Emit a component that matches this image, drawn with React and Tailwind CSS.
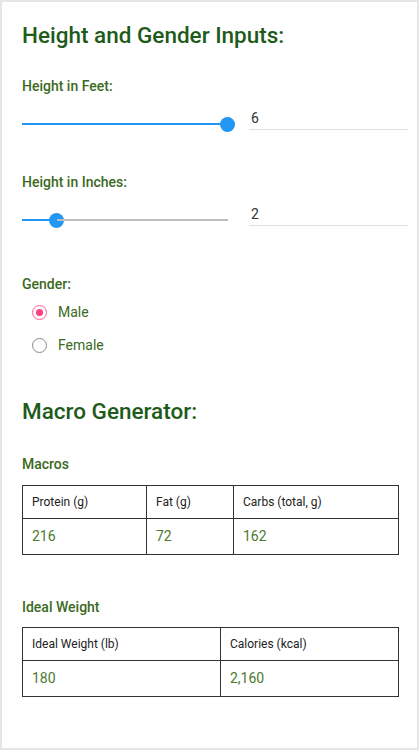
import { useState } from 'react';

function Slider({ value, max }) {
  const pct = (value / max) * 100;
  return (
    <div className="flex h-4 w-[206px] items-center">
      <div className="h-[2px] bg-[#2196f3]" style={{ width: `${pct}%` }} />
      <div className="-mx-[7px] h-[15px] w-[15px] shrink-0 rounded-full bg-[#2196f3]" />
      <div className="h-[2px] flex-1 bg-[#bdbdbd]" />
    </div>
  );
}

function HeightRow({ label, value, max }) {
  return (
    <div>
      <p className="text-[14px] font-medium text-[#3b6a1e]">{label}</p>
      <div className="mt-[13px] flex items-end">
        <div className="-mb-[2px]">
          <Slider value={value} max={max} />
        </div>
        <div className="ml-[21px] w-[159px] border-b border-[#e0e0e0] pb-[3px] pl-[2px] text-[14px] leading-[16px] text-[#333]">
          {value}
        </div>
      </div>
    </div>
  );
}

function Radio({ label, checked }) {
  return (
    <div className="flex items-center gap-[11px] pl-[10px]">
      {checked ? (
        <div className="flex h-[15px] w-[15px] items-center justify-center rounded-full border-[1.5px] border-[#ff5c93]">
          <div className="h-[7px] w-[7px] rounded-full bg-[#ff4081]" />
        </div>
      ) : (
        <div className="h-[15px] w-[15px] rounded-full border-[1.5px] border-[#8a8a8a]" />
      )}
      <span className="text-[14px] text-[#3b6a1e]">{label}</span>
    </div>
  );
}

function DataTable({ columns, widths, values }) {
  return (
    <table className="w-[376px] table-fixed border-collapse border-[1.5px] border-[#333]">
      <colgroup>
        {widths.map((w, i) => (
          <col key={i} style={{ width: w }} />
        ))}
      </colgroup>
      <tbody>
        <tr className="h-[33px]">
          {columns.map((c) => (
            <td key={c} className="border-[1.5px] border-[#333] px-[9px] text-[12px] text-[#222]">
              {c}
            </td>
          ))}
        </tr>
        <tr className="h-[36px]">
          {values.map((v, i) => (
            <td key={i} className="border-[1.5px] border-[#333] px-[9px] text-[14px] text-[#4b7a2e]">
              {v}
            </td>
          ))}
        </tr>
      </tbody>
    </table>
  );
}

export default function App() {
  const [gender] = useState('male');

  return (
    <div className="min-h-[750px] border-2 border-[#e6e6e6] bg-white font-['Roboto',sans-serif]">
      <div className="pt-[19px] pr-[9px] pb-[40px] pl-[20px]">
        <h1 className="text-[22.5px] font-medium leading-[28px] text-[#1e5b1a]">Height and Gender Inputs:</h1>

        <div className="mt-[27px] space-y-[42px]">
          <HeightRow label="Height in Feet:" value={6} max={6} />
          <HeightRow label="Height in Inches:" value={2} max={12} />
        </div>

        <p className="mt-[48px] text-[14px] font-medium text-[#3b6a1e]">Gender:</p>
        <div className="mt-[7px] space-y-[12px]">
          <Radio label="Male" checked={gender === 'male'} />
          <Radio label="Female" checked={gender === 'female'} />
        </div>

        <h2 className="mt-[41px] text-[22.5px] font-medium leading-[28px] text-[#1e5b1a]">Macro Generator:</h2>

        <p className="mt-[29px] text-[14px] font-medium text-[#3b6a1e]">Macros</p>
        <div className="mt-[10px]">
          <DataTable
            columns={['Protein (g)', 'Fat (g)', 'Carbs (total, g)']}
            widths={['124px', '87px', '165px']}
            values={['216', '72', '162']}
          />
        </div>

        <p className="mt-[42px] text-[14px] font-medium text-[#3b6a1e]">Ideal Weight</p>
        <div className="mt-[9px]">
          <DataTable
            columns={['Ideal Weight (lb)', 'Calories (kcal)']}
            widths={['198px', '178px']}
            values={['180', '2,160']}
          />
        </div>
      </div>
    </div>
  );
}
